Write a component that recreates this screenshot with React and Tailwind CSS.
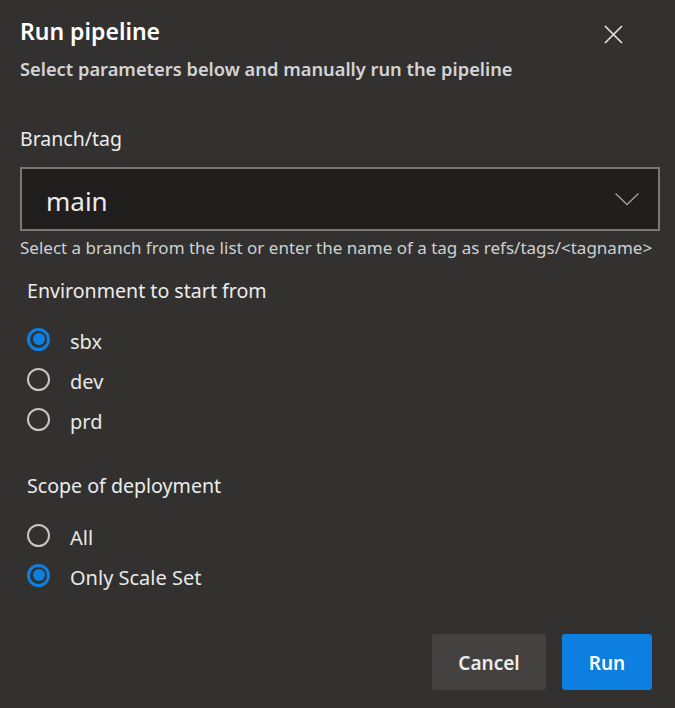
import { useState } from 'react'

const envs = ['sbx', 'dev', 'prd']
const scopes = ['All', 'Only Scale Set']

function Radio({ label, checked, onPick }) {
  return (
    <button onClick={onPick} className="h-[40px] flex items-center gap-[20px] text-left">
      {checked ? (
        <span className="w-[23px] h-[23px] rounded-full border-[3px] border-[#0c7fe0] flex items-center justify-center">
          <span className="w-[12px] h-[12px] rounded-full bg-[#0c7fe0]" />
        </span>
      ) : (
        <span className="w-[23px] h-[23px] rounded-full border-2 border-[#c8c6c4]" />
      )}
      <span className="text-[20px] leading-[24px] pt-[5px] text-[#e8e8e8]">{label}</span>
    </button>
  )
}

export default function App() {
  const [env,   setEnv]   = useState('sbx')
  const [scope, setScope] = useState('Only Scale Set')

  return (
    <div className="w-[675px] h-[708px] bg-[#323130] flex flex-col font-['Noto_Sans',sans-serif] text-white overflow-hidden">

      {/* header */}
      <div className="flex justify-between items-start pt-[17px] pl-[20px] pr-[52px]">
        <div className="flex flex-col">
          <p className="text-[23px] leading-[28px] font-semibold text-white">Run pipeline</p>
          <p className="mt-[12px] text-[18.3px] leading-[24px] font-semibold text-[#d4d4d4]">
            Select parameters below and manually run the pipeline
          </p>
        </div>
        <svg width="19" height="19" viewBox="0 0 19 19" className="mt-[8px]">
          <path d="M1 1 L18 18 M18 1 L1 18" stroke="#e8e8e8" strokeWidth="1.6" fill="none" />
        </svg>
      </div>

      {/* branch */}
      <div className="flex flex-col pl-[20px] pr-[15px] mt-[46px]">
        <p className="text-[19.5px] leading-[24px] text-[#ececec]">Branch/tag</p>
        <div className="mt-[16px] h-[64px] border-2 border-[#7a7876] bg-[#201f1e] flex items-center justify-between pl-[24px] pr-[18px]">
          <span className="text-[26px] leading-[32px] pt-[4px] text-[#ececec]">main</span>
          <svg width="26" height="14" viewBox="0 0 26 14">
            <path d="M1.5 1.5 L13 12.5 L24.5 1.5" stroke="#a19f9d" strokeWidth="1.3" fill="none" />
          </svg>
        </div>
        <p className="mt-[7px] text-[17px] leading-[20px] text-[#d0d0d0]">
          Select a branch from the list or enter the name of a tag as refs/tags/&lt;tagname&gt;
        </p>
      </div>

      {/* environment */}
      <div className="flex flex-col pl-[27px] mt-[21px]">
        <p className="text-[19.6px] leading-[24px] text-[#ececec]">Environment to start from</p>
        <div className="flex flex-col items-start mt-[16px]">
          {envs.map(e => (
            <Radio key={e} label={e} checked={env === e} onPick={() => setEnv(e)} />
          ))}
        </div>
      </div>

      {/* scope */}
      <div className="flex flex-col pl-[27px] mt-[35px]">
        <p className="text-[19.6px] leading-[24px] text-[#ececec]">Scope of deployment</p>
        <div className="flex flex-col items-start mt-[17px]">
          {scopes.map(s => (
            <Radio key={s} label={s} checked={scope === s} onPick={() => setScope(s)} />
          ))}
        </div>
      </div>

      {/* actions */}
      <div className="flex justify-end gap-[16px] pr-[23px] mt-[39px]">
        <button className="w-[114px] h-[56px] pt-[3px] rounded-[3px] bg-[#434241] text-[19px] font-semibold text-[#ececec]">
          Cancel
        </button>
        <button className="w-[90px] h-[56px] pt-[3px] rounded-[3px] bg-[#0c7fe0] text-[19px] font-semibold text-white">
          Run
        </button>
      </div>
    </div>
  )
}
